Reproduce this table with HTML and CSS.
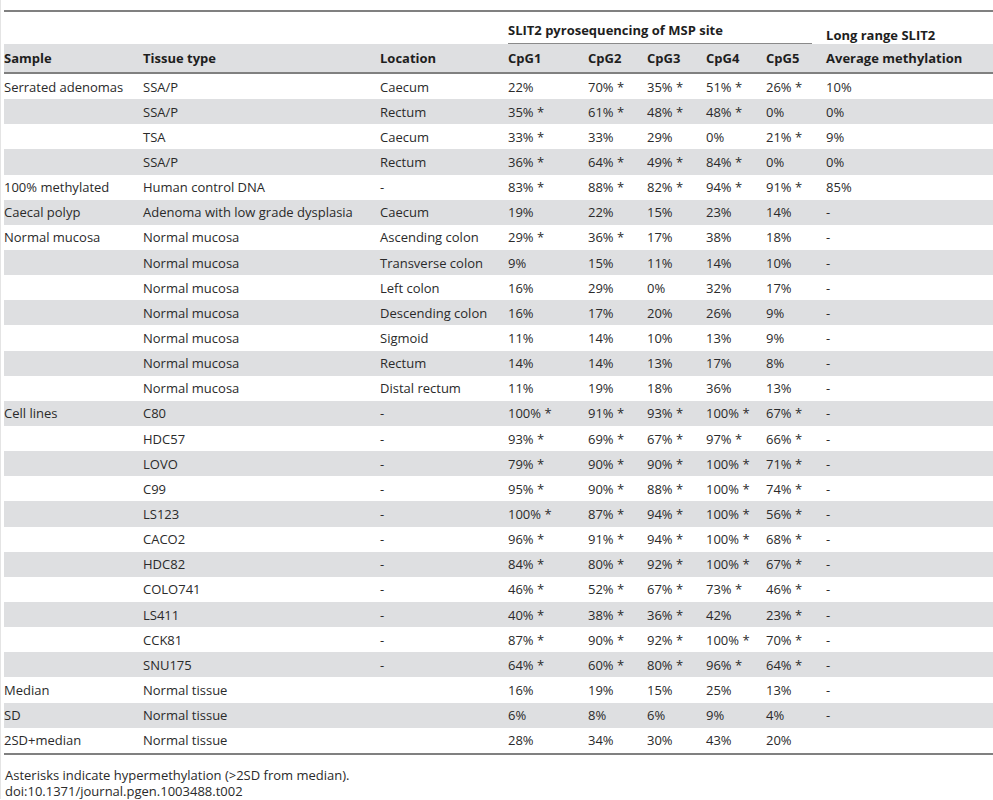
FILE: index.html
```html
<!DOCTYPE html>
<html lang="en">
<head>
    <meta charset="UTF-8">
    <title>SLIT2 methylation</title>
    <link rel="stylesheet" href="styles.css">
</head>
<body>
    <table class="data-table">
        <colgroup>
            <col class="c-sample">
            <col class="c-tissue">
            <col class="c-location">
            <col class="c-cpg1">
            <col class="c-cpg">
            <col class="c-cpg">
            <col class="c-cpg4">
            <col class="c-cpg4">
            <col class="c-long">
        </colgroup>
        <thead>
            <tr class="head-top">
                <th></th>
                <th></th>
                <th></th>
                <th colspan="5"><div class="group-rule">SLIT2 pyrosequencing of MSP site</div></th>
                <th class="long-title">Long range SLIT2</th>
            </tr>
            <tr class="head-main">
                <th>Sample</th>
                <th>Tissue type</th>
                <th>Location</th>
                <th>CpG1</th>
                <th>CpG2</th>
                <th>CpG3</th>
                <th>CpG4</th>
                <th>CpG5</th>
                <th>Average methylation</th>
            </tr>
        </thead>
        <tbody>
            <tr><td>Serrated adenomas</td><td>SSA/P</td><td>Caecum</td><td>22%</td><td>70% *</td><td>35% *</td><td>51% *</td><td>26% *</td><td>10%</td></tr>
            <tr><td></td><td>SSA/P</td><td>Rectum</td><td>35% *</td><td>61% *</td><td>48% *</td><td>48% *</td><td>0%</td><td>0%</td></tr>
            <tr><td></td><td>TSA</td><td>Caecum</td><td>33% *</td><td>33%</td><td>29%</td><td>0%</td><td>21% *</td><td>9%</td></tr>
            <tr><td></td><td>SSA/P</td><td>Rectum</td><td>36% *</td><td>64% *</td><td>49% *</td><td>84% *</td><td>0%</td><td>0%</td></tr>
            <tr><td>100% methylated</td><td>Human control DNA</td><td>-</td><td>83% *</td><td>88% *</td><td>82% *</td><td>94% *</td><td>91% *</td><td>85%</td></tr>
            <tr><td>Caecal polyp</td><td>Adenoma with low grade dysplasia</td><td>Caecum</td><td>19%</td><td>22%</td><td>15%</td><td>23%</td><td>14%</td><td>-</td></tr>
            <tr><td>Normal mucosa</td><td>Normal mucosa</td><td>Ascending colon</td><td>29% *</td><td>36% *</td><td>17%</td><td>38%</td><td>18%</td><td>-</td></tr>
            <tr><td></td><td>Normal mucosa</td><td>Transverse colon</td><td>9%</td><td>15%</td><td>11%</td><td>14%</td><td>10%</td><td>-</td></tr>
            <tr><td></td><td>Normal mucosa</td><td>Left colon</td><td>16%</td><td>29%</td><td>0%</td><td>32%</td><td>17%</td><td>-</td></tr>
            <tr><td></td><td>Normal mucosa</td><td>Descending colon</td><td>16%</td><td>17%</td><td>20%</td><td>26%</td><td>9%</td><td>-</td></tr>
            <tr><td></td><td>Normal mucosa</td><td>Sigmoid</td><td>11%</td><td>14%</td><td>10%</td><td>13%</td><td>9%</td><td>-</td></tr>
            <tr><td></td><td>Normal mucosa</td><td>Rectum</td><td>14%</td><td>14%</td><td>13%</td><td>17%</td><td>8%</td><td>-</td></tr>
            <tr><td></td><td>Normal mucosa</td><td>Distal rectum</td><td>11%</td><td>19%</td><td>18%</td><td>36%</td><td>13%</td><td>-</td></tr>
            <tr><td>Cell lines</td><td>C80</td><td>-</td><td>100% *</td><td>91% *</td><td>93% *</td><td>100% *</td><td>67% *</td><td>-</td></tr>
            <tr><td></td><td>HDC57</td><td>-</td><td>93% *</td><td>69% *</td><td>67% *</td><td>97% *</td><td>66% *</td><td>-</td></tr>
            <tr><td></td><td>LOVO</td><td>-</td><td>79% *</td><td>90% *</td><td>90% *</td><td>100% *</td><td>71% *</td><td>-</td></tr>
            <tr><td></td><td>C99</td><td>-</td><td>95% *</td><td>90% *</td><td>88% *</td><td>100% *</td><td>74% *</td><td>-</td></tr>
            <tr><td></td><td>LS123</td><td>-</td><td>100% *</td><td>87% *</td><td>94% *</td><td>100% *</td><td>56% *</td><td>-</td></tr>
            <tr><td></td><td>CACO2</td><td>-</td><td>96% *</td><td>91% *</td><td>94% *</td><td>100% *</td><td>68% *</td><td>-</td></tr>
            <tr><td></td><td>HDC82</td><td>-</td><td>84% *</td><td>80% *</td><td>92% *</td><td>100% *</td><td>67% *</td><td>-</td></tr>
            <tr><td></td><td>COLO741</td><td>-</td><td>46% *</td><td>52% *</td><td>67% *</td><td>73% *</td><td>46% *</td><td>-</td></tr>
            <tr><td></td><td>LS411</td><td>-</td><td>40% *</td><td>38% *</td><td>36% *</td><td>42%</td><td>23% *</td><td>-</td></tr>
            <tr><td></td><td>CCK81</td><td>-</td><td>87% *</td><td>90% *</td><td>92% *</td><td>100% *</td><td>70% *</td><td>-</td></tr>
            <tr><td></td><td>SNU175</td><td>-</td><td>64% *</td><td>60% *</td><td>80% *</td><td>96% *</td><td>64% *</td><td>-</td></tr>
            <tr><td>Median</td><td>Normal tissue</td><td></td><td>16%</td><td>19%</td><td>15%</td><td>25%</td><td>13%</td><td>-</td></tr>
            <tr><td>SD</td><td>Normal tissue</td><td></td><td>6%</td><td>8%</td><td>6%</td><td>9%</td><td>4%</td><td>-</td></tr>
            <tr><td>2SD+median</td><td>Normal tissue</td><td></td><td>28%</td><td>34%</td><td>30%</td><td>43%</td><td>20%</td><td></td></tr>
        </tbody>
    </table>

    <p class="table-note">
        Asterisks indicate hypermethylation (&gt;2SD from median).<br>
        doi:10.1371/journal.pgen.1003488.t002
    </p>
</body>
</html>
```

FILE: styles.css
```css
body, html {
    margin: 0;
    padding: 0;
    background: white;
}

body {
    padding: 10px 0 0 4px;
    font-family: 'Open Sans', sans-serif;
    font-size: 13px;
    color: #2a2a2a;
    border-left: 1px solid #e4e4e4;
    min-height: 790px;
    box-sizing: border-box;
}

/* Tableau principal */
.data-table {
    width: 989px;
    margin-left: -1px;
    border-collapse: collapse;
    table-layout: fixed;
    border-top: 2px solid #808080;
    border-bottom: 2px solid #808080;
}

.c-sample { width: 139px; }
.c-tissue { width: 237px; }
.c-location { width: 128px; }
.c-cpg1 { width: 80px; }
.c-cpg { width: 59px; }
.c-cpg4 { width: 60px; }
.c-long { width: 167px; }

.data-table th,
.data-table td {
    padding: 0;
    text-align: left;
    white-space: nowrap;
}

.data-table th {
    font-weight: bold;
    color: #1e1e1e;
}

.head-top th {
    height: 32px;
    vertical-align: bottom;
}

.group-rule {
    margin-right: 14px;
    padding-bottom: 4px;
    border-bottom: 1px solid #8a8a8a;
}

.long-title {
    padding-bottom: 5px;
}

.head-main th {
    height: 28px;
    background: #dedfe1;
    border-bottom: 2px solid #808080;
    vertical-align: middle;
}

.data-table td {
    height: 25.15px;
    vertical-align: middle;
}

.data-table tbody tr:nth-child(even) td {
    background: #dedfe1;
}

.table-note {
    margin: 12px 0 0 0;
    line-height: 16px;
}
```
